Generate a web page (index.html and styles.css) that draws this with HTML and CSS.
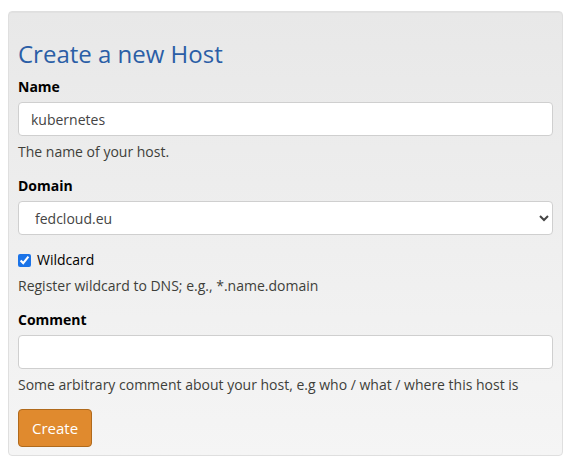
FILE: index.html
```html
<!DOCTYPE html>
<html>
<head>
<meta charset="utf-8">
<link rel="stylesheet" href="styles.css">
</head>
<body>
<div class="well">
  <h2 class="title">Create a new Host</h2>
  <form class="form">
    <div class="group">
      <label class="label">Name</label>
      <input class="control" type="text" value="kubernetes">
      <p class="help">The name of your host.</p>
    </div>
    <div class="group group-select">
      <label class="label">Domain</label>
      <select class="control select"><option>fedcloud.eu</option></select>
    </div>
    <div class="group">
      <label class="check"><input type="checkbox" checked class="checkbox"> Wildcard</label>
      <p class="help">Register wildcard to DNS; e.g., *.name.domain</p>
    </div>
    <div class="group">
      <label class="label">Comment</label>
      <input class="control" type="text" value="">
      <p class="help">Some arbitrary comment about your host, e.g who / what / where this host is</p>
    </div>
    <button type="button" class="btn">Create</button>
  </form>
</div>
</body>
</html>
```
FILE: styles.css
```css
html, body { margin: 0; padding: 0; background: #fff; }
body {
  font-family: "Open Sans", "Liberation Sans", sans-serif;
  font-size: 14px;
  color: #3e3f3a;
  padding: 11px 8px 0 8px;
}
.well {
  border: 1px solid #dfdfdf;
  border-radius: 4px;
  background: linear-gradient(#e8e8e8, #f5f5f5);
  padding: 10px 9px 8px 9px;
  box-shadow: inset 0 1px 1px rgba(0,0,0,0.03);
}
.title {
  margin: 17px 0 8px 0;
  font-size: 24px;
  font-weight: 400;
  color: #2b5ea6;
  line-height: 30px;
}
.group { margin-bottom: 14px; }
.group-select { margin-bottom: 15px; }
.label {
  display: block;
  font-weight: 700;
  color: #000;
  margin-bottom: 5px;
  line-height: 20px;
}
.control {
  display: block;
  box-sizing: border-box;
  width: 100%;
  height: 34px;
  padding: 6px 12px;
  font: inherit;
  color: #444;
  background: #fff;
  border: 1px solid #cfcfcf;
  border-radius: 4px;
}
.select { padding-left: 12px; }
.help { margin: 6px 0 0 0; line-height: 20px; color: #3e3f3a; }
.check { display: flex; align-items: center; gap: 6px; color: #000; line-height: 20px; }
.checkbox { margin: 0; width: 13px; height: 13px; accent-color: #1a73e8; }
.btn {
  font: inherit;
  font-size: 15px;
  color: #fff;
  background: #e08a2e;
  border: 1px solid #b06a1c;
  border-radius: 4px;
  padding: 8px 13px;
  line-height: 20px;
}
```
